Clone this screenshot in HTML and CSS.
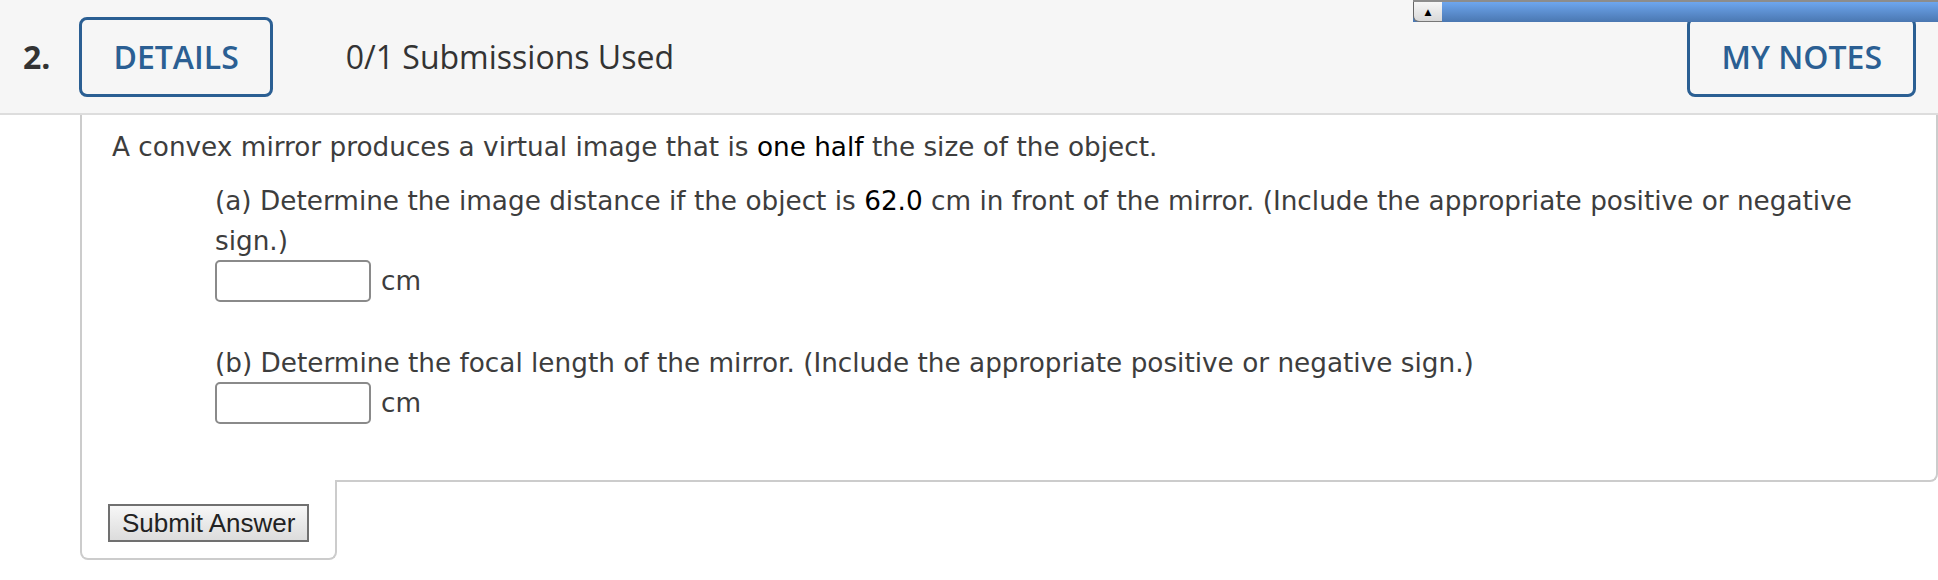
FILE: index.html
```html
<!DOCTYPE html>
<html lang="en">
<head>
    <meta charset="UTF-8">
    <title>Question 2</title>
    <link rel="stylesheet" href="styles.css">
</head>
<body>
    <!-- Question header -->
    <div class="q-header">
        <span class="q-num">2.</span>
        <button class="outline-btn">DETAILS</button>
        <span class="submissions">0/1 Submissions Used</span>
        <button class="outline-btn notes-btn">MY NOTES</button>
    </div>

    <!-- Collapsed toolbar sitting over the header -->
    <div class="toolbar">
        <span class="toolbar-toggle">&#9650;</span>
    </div>

    <!-- Question body -->
    <div class="question">
        <p class="prompt">A convex mirror produces a virtual image that is <span class="val">one half</span> the size of the object.</p>

        <div class="part">
            <p>(a) Determine the image distance if the object is <span class="val">62.0</span> cm in front of the mirror. (Include the appropriate positive or negative sign.)</p>
            <div class="answer-row">
                <input type="text" class="answer-input">
                <span class="unit">cm</span>
            </div>
        </div>

        <div class="part part-b">
            <p>(b) Determine the focal length of the mirror. (Include the appropriate positive or negative sign.)</p>
            <div class="answer-row">
                <input type="text" class="answer-input">
                <span class="unit">cm</span>
            </div>
        </div>
    </div>

    <div class="submit-box">
        <button class="submit-btn">Submit Answer</button>
    </div>
</body>
</html>
```

FILE: styles.css
```css
body {
    margin: 0;
    background: #fff;
    font-family: "DejaVu Sans", Verdana, sans-serif;
    color: #3d3d3d;
}

.q-header {
    display: flex;
    align-items: center;
    height: 113px;
    padding: 0 22px 0 23px;
    background-color: #f6f6f6;
    border-bottom: 2px solid #ddd;
    font-family: "Open Sans", sans-serif;
}

.q-num {
    font-size: 32px;
    font-weight: 700;
    color: #333;
    margin-right: 29px;
}

.outline-btn {
    height: 80px;
    box-sizing: border-box;
    padding: 0 31px;
    border: 3px solid #2b5f93;
    border-radius: 8px;
    background: transparent;
    color: #2b5f93;
    font-family: "Open Sans", sans-serif;
    font-size: 32px;
    font-weight: 600;
}

.submissions {
    margin-left: 73px;
    font-size: 32px;
    color: #333;
}

.notes-btn {
    margin-left: auto;
}

.toolbar {
    position: absolute;
    top: 0;
    left: 1413px;
    right: 0;
    height: 22px;
    box-sizing: border-box;
    border-top: 2px solid #8c8c8c;
    background: linear-gradient(#6ea6ee, #4a77b1);
}

.toolbar-toggle {
    display: flex;
    align-items: center;
    justify-content: center;
    width: 29px;
    height: 100%;
    box-sizing: border-box;
    border-left: 1px solid #666;
    border-bottom: 1px solid #777;
    border-radius: 0 0 0 6px;
    background: linear-gradient(#f6f6f6, #d9d9d9);
    color: #000;
    font-size: 9px;
}

.question {
    margin-left: 80px;
    padding: 12px 60px 56px 30px;
    border: 2px solid #ccc;
    border-top: none;
    border-bottom-right-radius: 8px;
    font-size: 26.3px;
    line-height: 40px;
}

.prompt {
    margin: 0;
}

.val {
    color: #000;
}

.part {
    margin: 14px 0 0 103px;
}

.part p {
    margin: 0;
}

.part-b {
    margin-top: 41px;
}

.answer-row {
    display: flex;
    align-items: center;
    gap: 10px;
    margin-top: -1px;
}

.answer-input {
    width: 156px;
    height: 42px;
    box-sizing: border-box;
    border: 2px solid #8a8a8a;
    border-radius: 5px;
    background: #fff;
}

.submit-box {
    width: 257px;
    margin: -2px 0 0 80px;
    padding: 24px 0 16px 26px;
    box-sizing: border-box;
    background: #fff;
    border: 2px solid #ccc;
    border-top: none;
    border-radius: 0 0 8px 8px;
}

.submit-btn {
    height: 38px;
    padding: 0 12px;
    border: 2px solid #707070;
    background: linear-gradient(#f7f7f7, #dcdcdc);
    color: #222;
    font-family: "Liberation Sans", Arial, sans-serif;
    font-size: 26px;
}
```
